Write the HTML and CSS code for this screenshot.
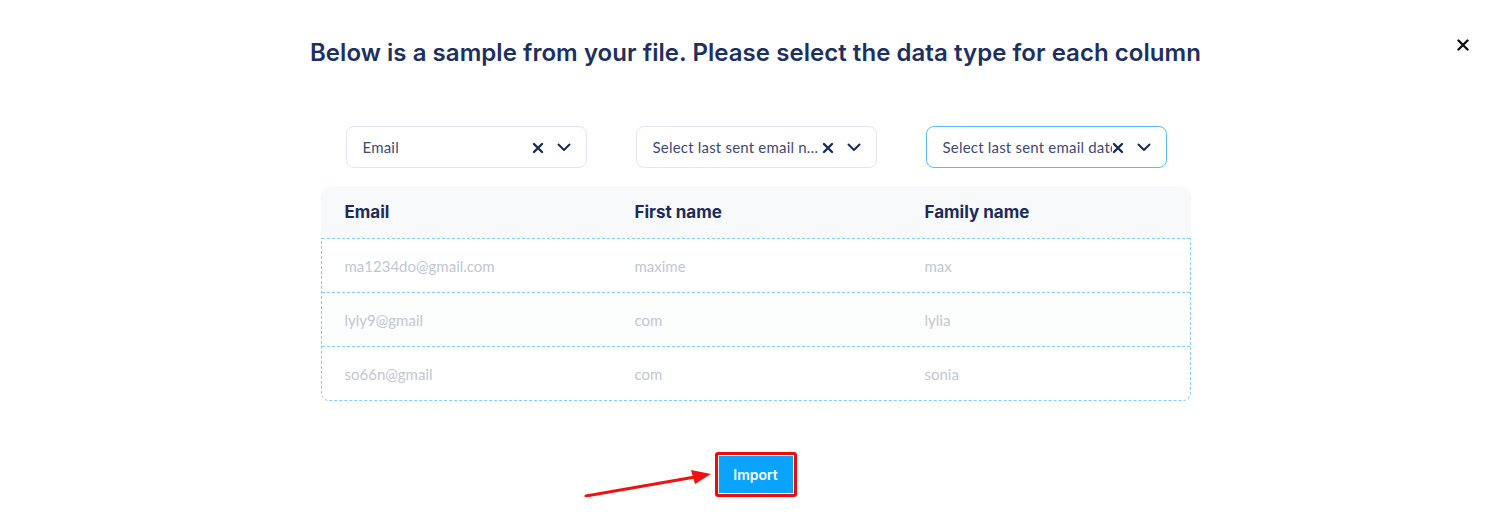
FILE: index.html
```html
<!DOCTYPE html>
<html lang="en">
<head>
    <meta charset="UTF-8">
    <meta name="viewport" content="width=device-width, initial-scale=1.0">
    <title>Import contacts</title>
    <link rel="stylesheet" href="styles.css">
</head>
<body>
    <div class="modal">
        <button class="close-button" aria-label="Close">
            <svg width="12" height="12" viewBox="0 0 12 12"><path d="M1.5 1.5 L10.5 10.5 M10.5 1.5 L1.5 10.5" stroke="#111" stroke-width="2.4" stroke-linecap="round"/></svg>
        </button>

        <h1 class="title">Below is a sample from your file. Please select the data type for each column</h1>

        <div class="mapping">
            <div class="select-col">
                <div class="select">
                    <span class="select-value">Email</span>
                    <span class="select-icons">
                        <svg class="icon-clear" width="12" height="12" viewBox="0 0 12 12"><path d="M2 2 L10 10 M10 2 L2 10" stroke="#1c2b55" stroke-width="2.4" stroke-linecap="round"/></svg>
                        <svg class="icon-caret" width="14" height="9" viewBox="0 0 14 9"><path d="M1.5 1.5 L7 7 L12.5 1.5" fill="none" stroke="#1c2b55" stroke-width="2" stroke-linecap="round" stroke-linejoin="round"/></svg>
                    </span>
                </div>
            </div>
            <div class="select-col">
                <div class="select">
                    <span class="select-value ellipsis">Select last sent email name</span>
                    <span class="select-icons">
                        <svg class="icon-clear" width="12" height="12" viewBox="0 0 12 12"><path d="M2 2 L10 10 M10 2 L2 10" stroke="#1c2b55" stroke-width="2.4" stroke-linecap="round"/></svg>
                        <svg class="icon-caret" width="14" height="9" viewBox="0 0 14 9"><path d="M1.5 1.5 L7 7 L12.5 1.5" fill="none" stroke="#1c2b55" stroke-width="2" stroke-linecap="round" stroke-linejoin="round"/></svg>
                    </span>
                </div>
            </div>
            <div class="select-col">
                <div class="select focused">
                    <span class="select-value">Select last sent email date</span>
                    <span class="select-icons">
                        <svg class="icon-clear" width="12" height="12" viewBox="0 0 12 12"><path d="M2 2 L10 10 M10 2 L2 10" stroke="#1c2b55" stroke-width="2.4" stroke-linecap="round"/></svg>
                        <svg class="icon-caret" width="14" height="9" viewBox="0 0 14 9"><path d="M1.5 1.5 L7 7 L12.5 1.5" fill="none" stroke="#1c2b55" stroke-width="2" stroke-linecap="round" stroke-linejoin="round"/></svg>
                    </span>
                </div>
            </div>
        </div>

        <div class="sample-table">
            <div class="sample-head">
                <div>Email</div>
                <div>First name</div>
                <div>Family name</div>
            </div>
            <div class="sample-body">
                <div class="sample-row">
                    <div>ma1234do@gmail.com</div>
                    <div>maxime</div>
                    <div>max</div>
                </div>
                <div class="sample-row alt">
                    <div>lyly9@gmail</div>
                    <div>com</div>
                    <div>lylia</div>
                </div>
                <div class="sample-row">
                    <div>so66n@gmail</div>
                    <div>com</div>
                    <div>sonia</div>
                </div>
            </div>
        </div>

        <div class="actions">
            <div class="import-wrap">
                <svg class="arrow" width="132" height="30" viewBox="0 0 132 30">
                    <path d="M3 26 L112 7" stroke="#ee1111" stroke-width="3" stroke-linecap="round"/>
                    <path d="M128 4 L108 0 L112 14 Z" fill="#ee1111"/>
                </svg>
                <button class="import-button">Import</button>
            </div>
        </div>
    </div>
</body>
</html>
```

FILE: styles.css
```css
body {
    margin: 0;
    padding: 0;
    background-color: #fff;
    font-family: Lato, "Open Sans", sans-serif;
}

.modal {
    position: relative;
    padding-top: 38px;
}

.close-button {
    position: absolute;
    top: 38px;
    right: 41px;
    width: 14px;
    height: 14px;
    padding: 0;
    border: none;
    background: none;
    cursor: pointer;
    display: flex;
    align-items: center;
    justify-content: center;
}

.title {
    margin: 0;
    text-align: center;
    font-family: Inter, sans-serif;
    font-size: 24px;
    line-height: 30px;
    font-weight: 600;
    letter-spacing: 0.05px;
    color: #1d3061;
}

.mapping {
    width: 870px;
    margin: 58px auto 0;
    display: grid;
    grid-template-columns: repeat(3, 290px);
}

.select-col {
    padding-left: 25px;
}

.select {
    box-sizing: border-box;
    width: 241px;
    height: 42px;
    border: 1px solid #e3e6ec;
    border-radius: 8px;
    display: flex;
    align-items: center;
    padding: 0 15px 0 16px;
    background-color: #fff;
}

.select.focused {
    border-color: #5db9f5;
}

.select-value {
    flex: 1;
    min-width: 0;
    overflow: hidden;
    white-space: nowrap;
    font-size: 15px;
    letter-spacing: 0.2px;
    color: #3d4a76;
}

.select-value.ellipsis {
    text-overflow: ellipsis;
}

.select-icons {
    display: flex;
    align-items: center;
    gap: 13px;
}

.icon-clear {
    margin-top: 1px;
}

.sample-table {
    width: 870px;
    margin: 18px auto 0;
}

.sample-head,
.sample-row {
    display: grid;
    grid-template-columns: repeat(3, 290px);
}

.sample-head {
    height: 52px;
    align-items: center;
    background-color: #f8f9fb;
    border-radius: 10px 10px 0 0;
    font-family: Inter, sans-serif;
    font-weight: 700;
    font-size: 17px;
    color: #1b2b5a;
}

.sample-head div,
.sample-row div {
    padding-left: 24px;
}

.sample-body {
    border: 1px dashed #86cdfb;
    border-top: none;
    border-radius: 0 0 8px 8px;
}

.sample-row {
    box-sizing: border-box;
    height: 54px;
    align-items: center;
    border-top: 1px dashed #86cdfb;
    font-size: 15px;
    color: #c2c7d1;
}

.sample-row div {
    padding-left: 23px;
}

.sample-row.alt {
    background-color: #fcfdfd;
}

.actions {
    display: flex;
    justify-content: center;
    margin-top: 51px;
}

.import-wrap {
    position: relative;
}

.arrow {
    position: absolute;
    right: 82px;
    top: 18px;
}

.import-button {
    box-sizing: border-box;
    width: 82px;
    height: 45px;
    border: 3px solid #f20a0a;
    border-radius: 3px;
    background-color: #0aa3ff;
    box-shadow: inset 0 0 0 1px #fff;
    color: #fff;
    font-family: Inter, sans-serif;
    font-size: 14px;
    font-weight: 600;
    cursor: pointer;
}
```
